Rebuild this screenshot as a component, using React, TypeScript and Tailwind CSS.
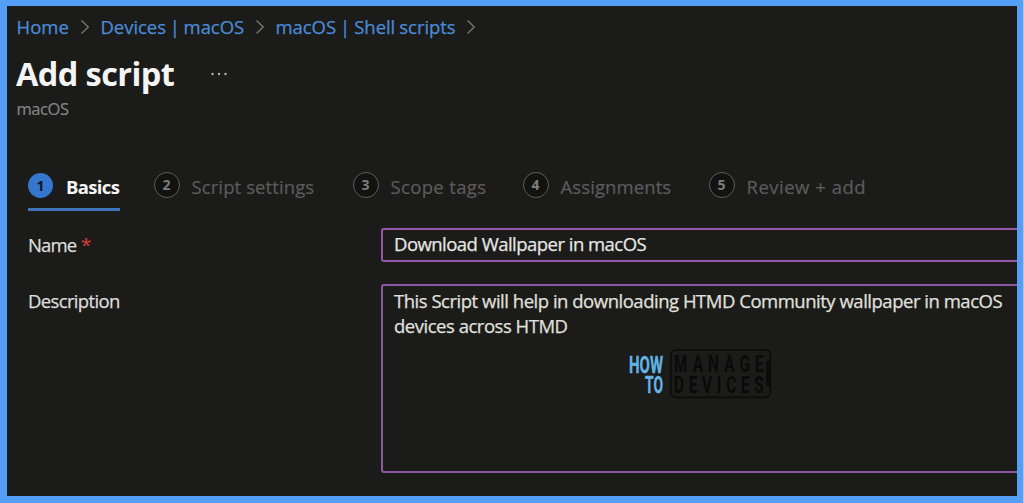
import { clsx } from 'clsx'

type Crumb = {
  label: string
  className: string
}

type Step = {
  label: string
  className: string
  textClass: string
}

const crumbs: Crumb[] = [
  { label: 'Home', className: 'w-[64px] tracking-[0px]' },
  { label: 'Devices | macOS', className: 'w-[155px] tracking-[-0.05px] [word-spacing:-1px]' },
  { label: 'macOS | Shell scripts', className: 'w-[191px] tracking-[-0.05px] [word-spacing:-0.7px]' },
]

const steps: Step[] = [
  { label: 'Basics', className: 'w-[125.5px]', textClass: 'tracking-[-0.65px]' },
  { label: 'Script settings', className: 'w-[199px]', textClass: 'tracking-[0.1px]' },
  { label: 'Scope tags', className: 'w-[170px]', textClass: 'tracking-[0.35px]' },
  { label: 'Assignments', className: 'w-[186px]', textClass: 'tracking-[0.1px]' },
  { label: 'Review + add', className: 'w-[170px]', textClass: 'tracking-[0.5px]' },
]

function Breadcrumb() {
  return (
    <nav className="flex h-[26px] items-center pl-[9.5px] text-[18.5px] leading-[26px] font-medium text-[#4a8bd6] [-webkit-text-stroke:0.25px]">
      {crumbs.map((crumb) => (
        <div key={crumb.label} className="flex shrink-0 items-center">
          <a href="#" className={clsx('block whitespace-nowrap', crumb.className)}>{crumb.label}</a>
          <svg className="mr-[12px] h-[16px] w-[8px] text-[#777573]" viewBox="0 0 8 16" fill="none" stroke="currentColor">
            <path strokeWidth={1.3} d="M0.5 1.5L7.2 8L0.5 14.5" />
          </svg>
        </div>
      ))}
    </nav>
  )
}

function Steps() {
  return (
    <div className="flex h-[40px] pl-[21px]">
      {steps.map((step, i) => (
        <div key={step.label} className={clsx('flex shrink-0 items-start', step.className)}>
          <div
            className={clsx(
              'flex h-[40px] items-start',
              i === 0 && 'w-[92px] border-b-[3px] border-[#3f74bd]',
            )}
          >
            <span
              className={clsx(
                'flex shrink-0 items-center justify-center rounded-full text-[14px] font-bold leading-none',
                i === 0
                  ? 'mt-[2px] h-[25px] w-[25px] bg-[#3577cf] text-[#11161d]'
                  : 'mt-[1px] h-[26px] w-[26px] border-[1.5px] border-[#5d5d5b] bg-[#121211] text-[#7d7d7b]',
              )}
            >
              {i + 1}
            </span>
            <span
              className={clsx(
                'whitespace-nowrap pt-[2.5px] text-[18.5px] leading-[26px]',
                i === 0
                  ? 'ml-[13px] font-bold text-[#f6f6f4]'
                  : 'ml-[12px] font-medium text-[#5c5c5a] [-webkit-text-stroke:0.2px]',
                step.textClass,
              )}
            >
              {step.label}
            </span>
          </div>
        </div>
      ))}
    </div>
  )
}

function Logo() {
  return (
    <svg className="block h-[52px] w-[146px]" viewBox="627 347 146 52" fontFamily="Roboto, sans-serif" fontWeight="700">
      <g fill="#62b4e2" stroke="#62b4e2" strokeWidth="0.4" fontSize="24.5">
        <text transform="translate(629 372.7)" textLength="34" lengthAdjust="spacingAndGlyphs">HOW</text>
        <text transform="translate(645 392.7)" textLength="18" lengthAdjust="spacingAndGlyphs">TO</text>
      </g>
      <rect x="670.8" y="349.8" width="99.5" height="47.6" rx="5" fill="none" stroke="#0c0c0b" strokeWidth="1.8" />
      <rect x="766" y="361" width="5" height="25" rx="1.5" fill="#0c0c0b" />
      <g fill="#0a0a0a" fontSize="23.5">
        <text transform="translate(674 372) scale(0.65 1)" textLength="138" lengthAdjust="spacing">MANAGE</text>
        <text transform="translate(674 392.5) scale(0.65 1)" textLength="138" lengthAdjust="spacing">DEVICES</text>
      </g>
    </svg>
  )
}

export default function App() {
  return (
    <div className="h-[503px] w-[1024px] overflow-hidden bg-[#aac7ee] pr-[1.5px] font-['Open_Sans','Noto_Sans',sans-serif]">
      <div className="h-full border-t-[6px] border-r-[6px] border-b-[7px] border-l-[7px] border-[#549ff5] bg-[#1b1b1a] pt-[8px]">
        <Breadcrumb />

        <div className="flex h-[54px] items-center pt-[14px] pl-[9px]">
          <h1 className="w-[194px] whitespace-nowrap text-[32.5px] leading-[44px] font-bold tracking-[-0.6px] text-[#f4f4f2]">Add script</h1>
          <svg className="h-[4px] w-[18px] text-[#b5b5b3]" viewBox="0 0 18 4" fill="currentColor">
            <circle cx="2.5" cy="2" r="1.2" />
            <circle cx="9" cy="2" r="1.2" />
            <circle cx="15.5" cy="2" r="1.2" />
          </svg>
        </div>
        <p className="h-[77px] pt-[3px] pl-[9.5px] text-[16.5px] leading-[24px] font-medium tracking-[-0.45px] text-[#858583] [-webkit-text-stroke:0.2px]">macOS</p>

        <Steps />

        <div className="mt-[17px] flex h-[34px] pl-[21px] text-[18.5px] font-medium text-[#dededc] [-webkit-text-stroke:0.25px]">
          <label className="w-[353px] shrink-0 pt-[4px] leading-[26px] tracking-[-0.9px]">
            Name <span className="ml-[1px] text-[#d13b3b]">*</span>
          </label>
          <div className="min-w-0 flex-1 whitespace-nowrap rounded-l-[3px] border-2 border-r-0 border-[#9558a8] pt-[1px] pl-[11px] leading-[26px] tracking-[-0.53px] text-[#e6e6e4]">
            Download Wallpaper in macOS
          </div>
        </div>

        <div className="mt-[21.5px] flex h-[189.5px] pl-[21px] text-[18.5px] font-medium text-[#dededc] [-webkit-text-stroke:0.25px]">
          <label className="w-[353px] shrink-0 pt-[4px] leading-[26px] tracking-[-0.65px]">Description</label>
          <div className="min-w-0 flex-1 rounded-l-[3px] border-2 border-r-0 border-[#8d56a0] pt-[2px] pl-[11px] leading-[26px] tracking-[-0.48px] text-[#e0e0de]">
            <p className="whitespace-nowrap">This Script will help in downloading HTMD Community wallpaper in macOS</p>
            <p className="-mt-px whitespace-nowrap">devices across HTMD</p>
            <div className="mt-[8px] ml-[233px] tracking-normal">
              <Logo />
            </div>
          </div>
        </div>
      </div>
    </div>
  )
}
